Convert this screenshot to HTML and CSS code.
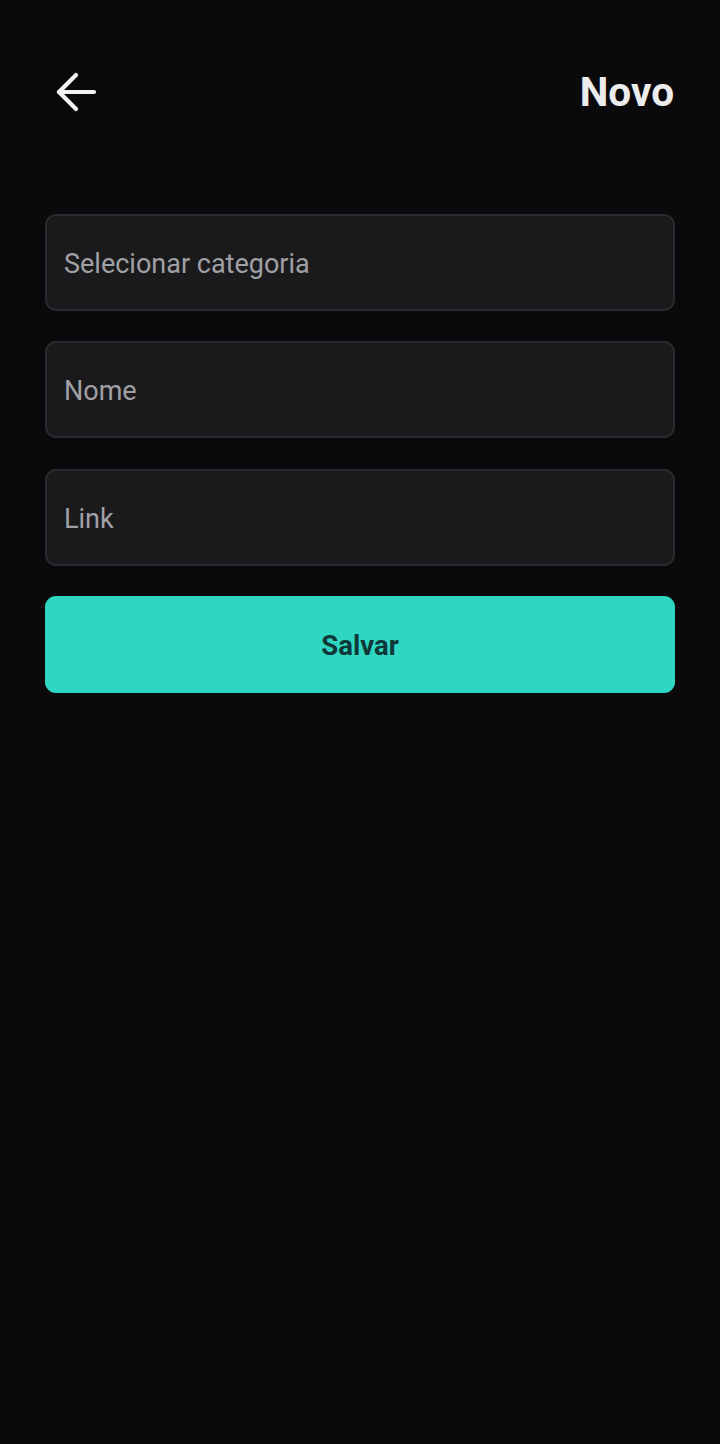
FILE: index.html
```html
<!DOCTYPE html>
<html lang="pt">
<head>
<meta charset="utf-8">
<link rel="stylesheet" href="styles.css">
</head>
<body>
<div class="screen">
  <header class="topbar">
    <button class="back" aria-label="Voltar">
      <svg width="44" height="44" viewBox="0 0 44 44" fill="none" stroke="#f2f2f2" stroke-width="4.2" stroke-linecap="round" stroke-linejoin="round">
        <path d="M39 20H4"/>
        <path d="M21 3L4 20L21 37"/>
      </svg>
    </button>
    <h1 class="title">Novo</h1>
  </header>
  <form class="form">
    <div class="field">Selecionar categoria</div>
    <div class="field">Nome</div>
    <div class="field field-last">Link</div>
    <button type="button" class="save">Salvar</button>
  </form>
</div>
</body>
</html>
```
FILE: styles.css
```css
* { box-sizing: border-box; }
html, body {
  margin: 0;
  padding: 0;
  background: #0a0a0c;
}
body {
  font-family: Roboto, "Noto Sans", Arial, sans-serif;
}
.screen {
  width: 720px;
  min-height: 1444px;
  padding: 0 45px;
}
.topbar {
  display: flex;
  justify-content: space-between;
  align-items: flex-start;
  height: 184px;
  padding-top: 70px;
}
.back {
  background: none;
  border: 0;
  padding: 0;
  margin-left: 10px;
  margin-top: 2px;
  width: 44px;
  height: 44px;
  display: flex;
}
.title {
  margin: 0;
  color: #ececec;
  font-size: 40.5px;
  font-weight: 700;
  line-height: 44px;
  margin-right: 1px;
}
.form {
  display: flex;
  flex-direction: column;
  gap: 30px;
  margin-top: 30px;
}
.field {
  height: 97px;
  border: 2px solid #2a2a2e;
  background: #1a1a1d;
  border-radius: 11px;
  padding: 2px 17px 0;
  display: flex;
  align-items: center;
  color: #a0a0a5;
  font-size: 27px;
}
.field-last {
  margin-top: 1px;
}
.save {
  height: 97px;
  border: 0;
  border-radius: 11px;
  background: #2fd6c2;
  color: #0f3838;
  font-family: inherit;
  font-size: 27.5px;
  font-weight: 700;
  padding: 2px 0 0;
}
```
